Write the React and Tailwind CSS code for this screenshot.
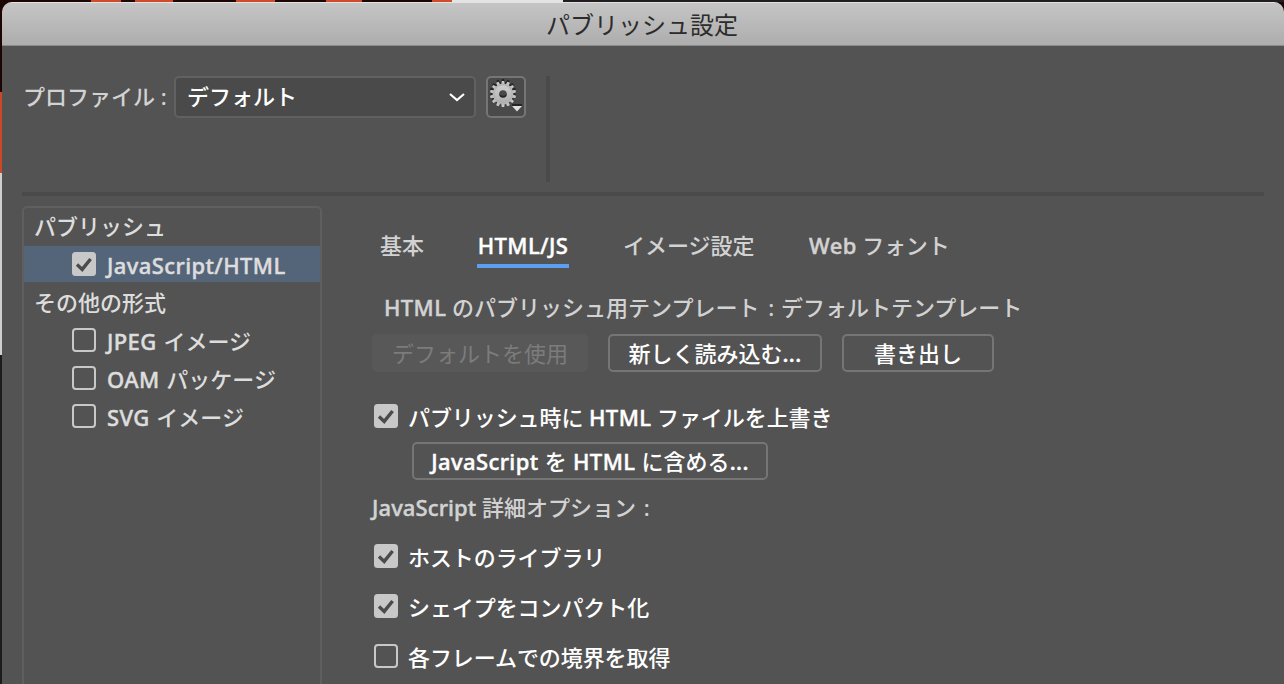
const LATIN_JP = "font-['Noto_Sans','Noto_Sans_CJK_JP',sans-serif]";

function L({ children }) {
  return <span className="tracking-[0.4px] [-webkit-text-stroke:0.45px_currentColor]">{children}</span>;
}

function Check({ on }) {
  return on ? (
    <svg className="block shrink-0" width="24" height="24" viewBox="0 0 24 24">
      <rect width="24" height="24" rx="3.5" fill="#c8c8c8" />
      <path d="M5 12.6 L10.2 17.4 L18.6 7" fill="none" stroke="#4b4b4b" strokeWidth="3.4" />
    </svg>
  ) : (
    <span className="block h-6 w-6 shrink-0 rounded-[4px] border-2 border-[#c8c8c8]" />
  );
}

function Gear() {
  const teeth = Array.from({ length: 14 }, (_, i) => (i * 360) / 14);
  const body = (fill) => (
    <g fill={fill}>
      <path
        fillRule="evenodd"
        d="M13 2.8a10.2 10.2 0 1 0 0 20.4a10.2 10.2 0 1 0 0-20.4ZM13 9.2a3.8 3.8 0 1 1 0 7.6a3.8 3.8 0 1 1 0-7.6Z"
      />
      {teeth.map((a) => (
        <path key={a} d="M11 4.5L11.8 0H14.2L15 4.5Z" transform={`rotate(${a} 13 13)`} />
      ))}
    </g>
  );
  return (
    <svg width="36" height="36" viewBox="0 0 36 36" className="block">
      <defs>
        <linearGradient id="metal" x1="0" y1="0" x2="0" y2="1">
          <stop offset="0" stopColor="#d0d0d0" />
          <stop offset="1" stopColor="#adadad" />
        </linearGradient>
      </defs>
      <g transform="translate(2 0)">{body("#252525")}</g>
      <g transform="translate(2 2)">{body("url(#metal)")}</g>
      <path d="M24 25H34V27H24Z" fill="#252525" />
      <path d="M24 27H34L29 32.6Z" fill="#e0e0e0" />
    </svg>
  );
}

function Item({ on, children, selected }) {
  return (
    <div
      className={
        "flex items-center gap-[11px] pl-12 " +
        (selected ? "mt-px mb-px h-9 bg-[#556579]" : "h-[38px]")
      }
    >
      <Check on={on} />
      <span className="whitespace-nowrap pt-[2px] [word-spacing:1px]">{children}</span>
    </div>
  );
}

function Button({ className, children }) {
  return (
    <button
      className={
        "flex h-[38px] shrink-0 items-center justify-center whitespace-nowrap rounded-[5px] border-2 border-[#757575] text-white " +
        className
      }
    >
      {children}
    </button>
  );
}

function Option({ on, children }) {
  return (
    <div className="flex h-[50px] items-center gap-[10px] text-white">
      <Check on={on} />
      <span className="whitespace-nowrap pt-px tracking-[-0.08px]">{children}</span>
    </div>
  );
}

export default function App() {
  return (
    <div
      className={
        "flex h-[684px] w-[1284px] flex-col overflow-hidden bg-[#1b0603] text-[22px] leading-[36px] font-medium " +
        LATIN_JP
      }
    >
      <div className="flex h-[2px] shrink-0">
        <i className="w-[91px]" />
        <i className="w-[30px] bg-[#cf4b2a]" />
        <i className="w-[14px]" />
        <i className="w-[38px] bg-[#cf4b2a]" />
        <i className="w-[63px]" />
        <i className="w-[39px] bg-[#cf4b2a]" />
        <i className="w-[51px]" />
        <i className="w-[36px] bg-[#cf4b2a]" />
        <i className="w-[70px]" />
        <i className="w-[20px] bg-[#cf4b2a]" />
        <i className="w-[111px] bg-[#e4e4e4]" />
        <i className="flex-1 bg-[#201e1e]" />
      </div>
      <div className="flex flex-1">
        <div className="flex w-[2px] flex-col">
          <i className="h-[90px]" />
          <i className="h-[81px] bg-[#c84827]" />
          <i className="h-[182px] bg-[#cfcfcf]" />
          <i className="flex-1 bg-[#1c1c1c]" />
        </div>
        <div className="flex w-[1282px] flex-col overflow-hidden rounded-t-[10px] bg-[#535353] text-[#d2d2d2]">
          <header className="h-[44px] shrink-0 border-t border-b border-t-[#e2e2e2] border-b-[#8b8b8b] bg-linear-to-b from-[#c5c5c5] to-[#adadad] pr-[2px] text-center text-[24px] leading-[43px] font-normal text-[#2c2c2c]">
            パブリッシュ設定
          </header>

          <div className="ml-5 mr-5 flex h-[150px] shrink-0 border-b-4 border-[#4a4a4a] pt-[30px]">
            <div className="h-[42px] w-[153px] whitespace-nowrap pl-px leading-[41px]">
              プロファイル :
            </div>
            <div className="-ml-px flex h-[42px] w-[302px] items-center justify-between rounded-[5px] border-2 border-[#616161] bg-[#4a4a4a] pl-[11px] pr-[8px] text-white">
              <span className="pb-[2px]">デフォルト</span>
              <svg width="18" height="10" viewBox="0 0 18 10">
                <path d="M2 2L9 8L16 2" fill="none" stroke="#fff" strokeWidth="2.2" />
              </svg>
            </div>
            <button className="ml-[10px] h-[42px] w-10 rounded-[5px] border-2 border-[#757575] bg-[#4a4a4a]">
              <Gear />
            </button>
            <div className="ml-5 h-[106px] w-1 bg-[#4a4a4a]" />
          </div>

          <div className="flex flex-1 pl-5">
            <aside className="mt-[10px] h-[500px] w-[300px] shrink-0 rounded-t-[5px] border-2 border-[#5f5f5f] text-[#dddddd]">
              <div className="h-[37px] pl-[10px] leading-[37px]">パブリッシュ</div>
              <Item on selected><L>JavaScript/HTML</L></Item>
              <div className="h-[38px] pl-[10px] leading-[38px]">その他の形式</div>
              <Item><L>JPEG</L> イメージ</Item>
              <Item><L>OAM</L> パッケージ</Item>
              <Item><L>SVG</L> イメージ</Item>
            </aside>

            <main className="ml-[50px] flex-1">
              <nav className="flex h-[72px] items-start pt-[32px]">
                <span className="ml-2 w-[97px] leading-[34px]">基本</span>
                <span className="h-[40px] w-[92px] border-b-4 border-[#5c9ff2] text-center leading-[34px] text-white">
                  <L>HTML/JS</L>
                </span>
                <span className="ml-[54px] w-[186px] leading-[34px]">イメージ設定</span>
                <span className="leading-[34px] tracking-[-0.2px]"><L>Web</L> フォント</span>
              </nav>
              <div className="mt-[22px] h-[44px] whitespace-nowrap pl-3 leading-[34px]">
                <L>HTML</L> のパブリッシュ用テンプレート<span className="ml-[2px] [word-spacing:1px]"> : </span>
                デフォルトテンプレート
              </div>
              <div className="flex">
                <div className="flex h-[38px] w-[216px] items-center justify-center rounded-[5px] bg-[#585858] pb-px font-normal text-[#7c7c7c]">
                  デフォルトを使用
                </div>
                <Button className="ml-5 w-[214px] pb-px">
                  <span>新しく読み込む<L>...</L></span>
                </Button>
                <Button className="ml-5 w-[152px] pb-px">書き出し</Button>
              </div>
              <div className="mt-[19px] pl-[2px]">
                <Option on>パブリッシュ時に <L>HTML</L> ファイルを上書き</Option>
              </div>
              <Button className="mt-px ml-10 w-[356px]">
                <span className="[word-spacing:0.5px]">
                  <L>JavaScript</L> を <L>HTML</L> に含める<L>...</L>
                </span>
              </Button>
              <div className="h-[51px] whitespace-nowrap pt-[9px]">
                <span className="tracking-[0.1px] [-webkit-text-stroke:0.45px_currentColor]">JavaScript</span> 詳細オプション<span className="ml-[2px]"> :</span>
              </div>
              <div className="pl-[2px]">
                <Option on>ホストのライブラリ</Option>
                <Option on>シェイプをコンパクト化</Option>
                <Option>各フレームでの境界を取得</Option>
              </div>
            </main>
          </div>
        </div>
      </div>
    </div>
  );
}
